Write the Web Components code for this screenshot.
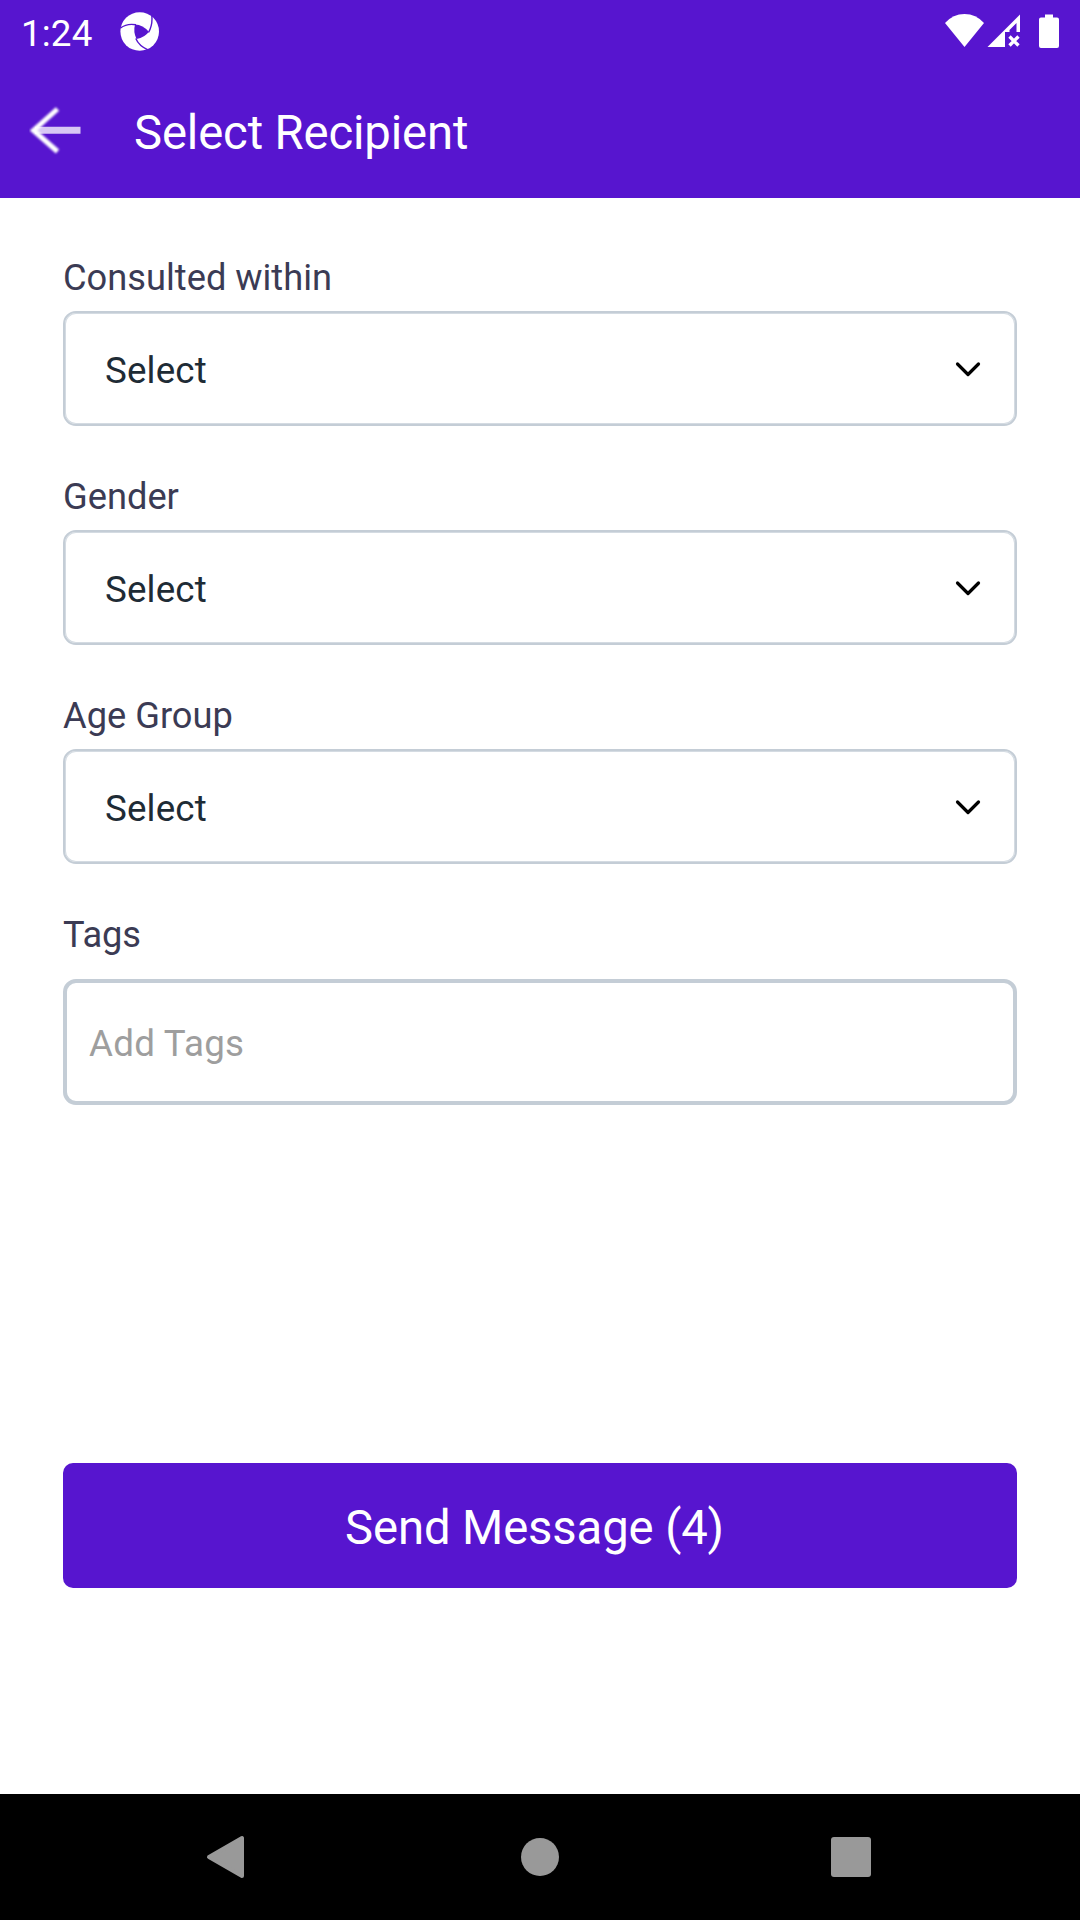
<!DOCTYPE html>
<html lang="en">
<head>
<meta charset="utf-8">
<title>Select Recipient</title>
<style>
body { margin: 0; background: #fff; font-family: Roboto, "Liberation Sans", sans-serif; --brand: #5715cf; }
</style>
</head>
<body>
<recipient-screen></recipient-screen>
<script>
function define(name, html) {
  const template = document.createElement('template');
  template.innerHTML = html;
  customElements.define(name, class extends HTMLElement {
    constructor() {
      super();
      this.attachShadow({ mode: 'open' }).append(template.content.cloneNode(true));
    }
  });
}

define('status-bar', `
<style>
:host { display: flex; height: 63px; color: #fff; font-size: 36.75px; letter-spacing: .15px; line-height: 67px; }
.time { padding-left: 21px; width: 99px; flex: none; }
.notice { width: 40px; height: 40px; margin-top: 12px; }
.notice .cut { fill: var(--brand); }
.notice .seam { fill: none; stroke: var(--brand); stroke-width: 1.4; }
.system { margin-left: auto; width: 140px; height: 63px; }
svg { display: block; flex: none; }
</style>
<span class="time">1:24</span>
<svg class="notice" viewBox="0 0 40 40">
  <circle cx="19.700" cy="19.500" r="19.300" fill="#fff"/>
  <path class="cut" d="M15 12.500Q23 12.800 28.800 19.800Q25 25.500 16.500 27Q13 20 15 12.500Z"/>
  <path class="seam" d="M.2 16.200Q7 11 16 12.800M28.500 20.500Q32.800 13 31.800 3.500M15.800 26.500Q19 34 28 37.800"/>
</svg>
<svg class="system" viewBox="940 0 140 63">
  <g fill="#fff">
    <path d="M945 23Q953 14 964.500 14T984 23L964.500 47Z"/>
    <path d="M1020 14.500V32H1016.500V23L1009.500 30V32H1005V47H987.500Z"/>
    <path d="M1045 14.500H1053V17.500H1057Q1059 17.500 1059 19.500V46Q1059 48 1057 48H1041Q1039 48 1039 46V19.500Q1039 17.500 1041 17.500H1045Z"/>
  </g>
  <path d="M1009.500 36.500L1018.500 45.500M1018.500 36.500L1009.500 45.500" stroke="#fff" stroke-width="3.300"/>
</svg>`);

define('app-bar', `
<style>
:host { display: flex; height: 135px; color: #fff; font-size: 47.25px; letter-spacing: -.15px; line-height: 140px; }
svg { display: block; width: 54px; height: 50px; margin: 42px 51px 0 29px; flex: none; }
.head { filter: blur(.9px); }
</style>
<svg viewBox="0 0 54 50" fill="none" stroke="#fff">
  <path d="M6 25.300H51.500" stroke-width="7" opacity=".76"/>
  <path class="head" d="M28.500 4L4.500 25.500L28.500 46.500" stroke-width="5"/>
</svg>
<slot></slot>`);

define('select-field', `
<style>
:host { display: block; height: 219px; font-size: 36.75px; }
.label { display: block; height: 53px; line-height: 39px; font-size: 36.25px; color: #3b3b54; }
.box { box-sizing: border-box; height: 115px; border: 2px solid #c4cdd6; box-shadow: inset 0 0 0 1px #d4dbe2; border-radius: 13px; display: flex; align-items: center; justify-content: space-between; padding: 3px 34px 0 40px; letter-spacing: .15px; color: #1e2b35; }
svg { display: block; width: 26px; height: 16px; margin-top: -3px; }
</style>
<span class="label"><slot></slot></span>
<div class="box"><slot name="value"></slot>
<svg viewBox="0 0 26 16"><path d="M2.500 3L13 13.500L23.500 3" fill="none" stroke="#000" stroke-width="3.200" stroke-linecap="round" stroke-linejoin="round"/></svg></div>`);

define('tag-field', `
<style>
:host { display: block; font-size: 36.75px; }
.label { display: block; height: 64px; line-height: 39px; font-size: 36.25px; letter-spacing: -.15px; color: #3b3b54; }
.box { box-sizing: border-box; height: 126px; border: 4px solid #c4cdd6; border-radius: 13px; padding: 0 22px; line-height: 121px; letter-spacing: .25px; color: #9e9e9e; }
</style>
<span class="label"><slot></slot></span>
<div class="box"><slot name="hint"></slot></div>`);

define('action-button', `
<style>
:host { display: block; height: 125px; box-sizing: border-box; padding-right: 11px; border-radius: 10px; background: var(--brand); color: #fff; text-align: center; font-size: 47.25px; letter-spacing: -.12px; line-height: 130px; }
</style>
<slot></slot>`);

define('navigation-bar', `
<style>
:host { display: flex; height: 126px; background: #000; justify-content: space-between; align-items: center; padding: 0 208px 0 205px; }
svg { display: block; }
</style>
<svg width="40" height="44" viewBox="0 0 40 44"><path d="M37 3V41L4 22Z" fill="#999" stroke="#999" stroke-width="4" stroke-linejoin="round"/></svg>
<svg width="44" height="40" viewBox="0 0 44 40"><circle cx="24" cy="20" r="19" fill="#999"/></svg>
<svg width="41" height="40" viewBox="0 0 41 40"><rect width="40" height="40" rx="3" fill="#999"/></svg>`);

define('recipient-screen', `
<style>
:host { display: flex; flex-direction: column; height: 1920px; background: #fff; }
header { background: var(--brand); height: 198px; flex: none; }
main { flex: 1; padding: 60px 63px 0; display: flex; flex-direction: column; }
action-button { margin-top: 358px; }
navigation-bar { flex: none; }
</style>
<header><status-bar></status-bar><app-bar>Select Recipient</app-bar></header>
<main>
  <select-field>Consulted within<span slot="value">Select</span></select-field>
  <select-field>Gender<span slot="value">Select</span></select-field>
  <select-field>Age Group<span slot="value">Select</span></select-field>
  <tag-field>Tags<span slot="hint">Add Tags</span></tag-field>
  <action-button>Send Message (4)</action-button>
</main>
<navigation-bar></navigation-bar>`);
</script>
</body>
</html>
